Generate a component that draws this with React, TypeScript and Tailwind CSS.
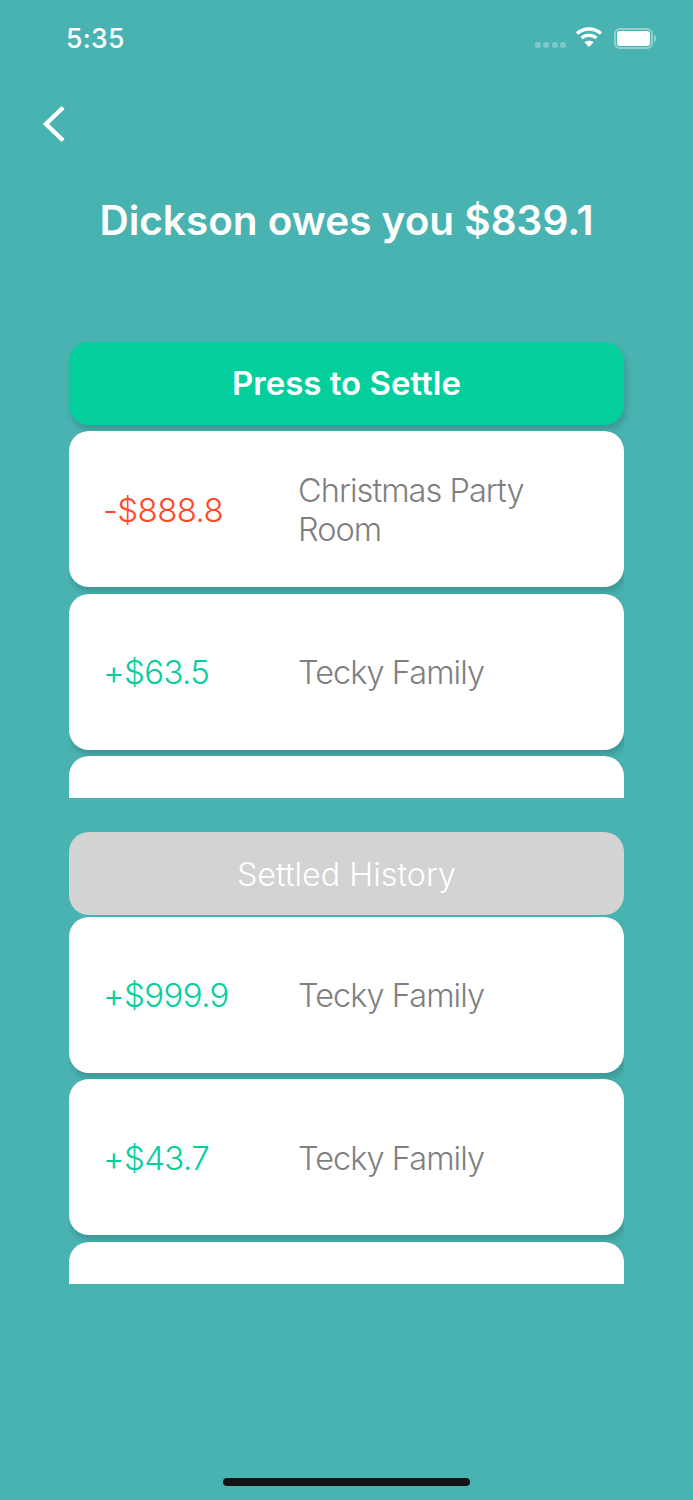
import React from "react";

type Row = { amount: string; label: string; tone: "red" | "green" };

const pending: Row[] = [
  { amount: "-$888.8", label: "Christmas Party Room", tone: "red" },
  { amount: "+$63.5", label: "Tecky Family", tone: "green" },
  { amount: "", label: "", tone: "green" },
];

const settled: Row[] = [
  { amount: "+$999.9", label: "Tecky Family", tone: "green" },
  { amount: "+$43.7", label: "Tecky Family", tone: "green" },
  { amount: "", label: "", tone: "green" },
];

function StatusBar() {
  return (
    <div className="flex h-[76px] items-center justify-between pl-[66px] pr-[37px] text-white">
      <span className="text-[26.5px] font-medium leading-none tracking-[0.3px]">5:35</span>
      <div className="flex items-center">
        <div className="mt-[14px] flex gap-[2.5px]">
          <span className="h-[6px] w-[6px] rounded-full bg-white/30" />
          <span className="h-[6px] w-[6px] rounded-full bg-white/30" />
          <span className="h-[6px] w-[6px] rounded-full bg-white/30" />
          <span className="h-[6px] w-[6px] rounded-full bg-white/30" />
        </div>
        <svg width="28" height="22" viewBox="0 0 28 22" className="ml-[9px] mb-[2px]" fill="none" stroke="white" strokeWidth="3.4">
          <path d="M2 7.5C9 1.5 19 1.5 26 7.5" />
          <path d="M6.5 12C11 8.3 17 8.3 21.5 12" />
          <path d="M14 21l-4.6-4.8c2.6-2 6.6-2 9.2 0z" fill="white" stroke="none" />
        </svg>
        <div className="ml-[11px] flex items-center">
          <div className="flex h-[21px] w-[39px] items-center justify-center rounded-[6px] border-2 border-white/40">
            <div className="h-[15px] w-[33px] rounded-[3px] bg-white" />
          </div>
          <div className="ml-[1px] h-[7px] w-[2px] rounded-r-sm bg-white/40" />
        </div>
      </div>
    </div>
  );
}

function Card({ row }: { row: Row }) {
  return (
    <div className="mb-[6.5px] flex h-[156px] items-center rounded-[20px] bg-white pl-[34px] shadow-[2px_5px_6px_rgba(0,0,0,0.16)]">
      <div className={`w-[195px] shrink-0 pt-[3px] text-[33px] font-light tracking-[-0.6px] ${row.tone === "red" ? "text-[#ff4a26]" : "text-[#04cf9c]"}`}>
        {row.amount}
      </div>
      <div className="w-[270px] pt-[2px] text-[32.5px] font-light leading-[39px] tracking-[-0.95px] text-[#7f7f7f]">{row.label}</div>
    </div>
  );
}

export default function App() {
  return (
    <div className="h-[1500px] w-[693px] overflow-hidden bg-[#48b3b1] font-['Inter',sans-serif]">
      <StatusBar />

      <div className="pl-[40px] pt-[28px]">
        <svg width="28" height="40" viewBox="0 0 28 40" fill="none" stroke="white" strokeWidth="4.4" strokeLinecap="square">
          <path d="M21.5 5L6 20L21.5 35" />
        </svg>
      </div>

      <h1 className="mt-[49px] text-center text-[40.5px] font-semibold leading-[56px] text-white">Dickson owes you $839.1</h1>

      <div className="mx-[69px] mt-[93px]">
        <button className="mb-[6px] flex h-[83px] w-full items-center justify-center rounded-[20px] bg-[#04cf9c] text-[33px] font-semibold text-white shadow-[2px_5px_6px_rgba(0,0,0,0.16)]">
          Press to Settle
        </button>
        <div className="h-[367px] overflow-hidden">
          {pending.map((row, i) => (
            <Card key={i} row={row} />
          ))}
        </div>

        <div className="mt-[34px] mb-[1.5px] flex h-[83px] items-center justify-center rounded-[20px] bg-[#d3d3d3] pt-[3px] text-[32.3px] font-light text-white">
          Settled History
        </div>
        <div className="h-[367.5px] overflow-hidden">
          {settled.map((row, i) => (
            <Card key={i} row={row} />
          ))}
        </div>
      </div>

      <div className="mx-auto mt-[194px] h-[8px] w-[247px] rounded-full bg-[#141414]" />
    </div>
  );
}
